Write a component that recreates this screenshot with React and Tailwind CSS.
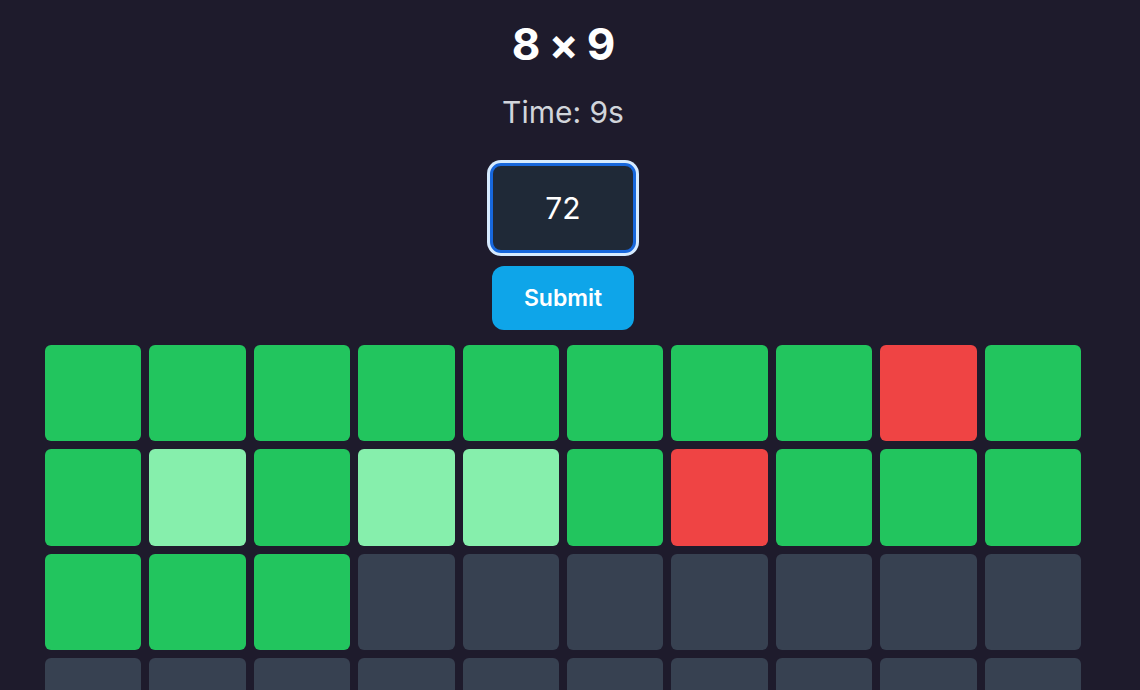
const rows = [
  ['g', 'g', 'g', 'g', 'g', 'g', 'g', 'g', 'r', 'g'],
  ['g', 'l', 'g', 'l', 'l', 'g', 'r', 'g', 'g', 'g'],
  ['g', 'g', 'g', 'e', 'e', 'e', 'e', 'e', 'e', 'e'],
];

const colors = {
  g: 'bg-[#22c55e]',
  l: 'bg-[#86efac]',
  r: 'bg-[#ef4444]',
  e: 'bg-[#374151]',
};

export default function App() {
  const cells = [];
  for (let r = 0; r < 10; r++) {
    for (let c = 0; c < 10; c++) {
      cells.push(rows[r] ? rows[r][c] : 'e');
    }
  }

  return (
    <div className="min-h-screen bg-[#1e1b2c] text-white" style={{ fontFamily: 'Inter, "Noto Sans", sans-serif' }}>
      <div className="w-[1126px]">
        <div className="flex flex-col items-center pt-[22px]">
          <h1 className="text-[44px] font-bold leading-none tracking-tight">8 × 9</h1>
          <p className="mt-[31px] text-[30px] leading-none text-[#d1d5db]">Time: 9s</p>
          <div className="mt-[33px] rounded-[14px] bg-[#d6ebff] p-[3px]">
            <input
              readOnly
              value="72"
              className="block h-[90px] w-[146px] rounded-[11px] border-[3px] border-[#1767dc] bg-[#1f2937] text-center text-[30px] text-white outline-none"
            />
          </div>
          <button className="mt-[10px] h-[64px] w-[142px] rounded-xl bg-[#0ea5e9] text-[23px] font-semibold text-white">
            Submit
          </button>
        </div>
        <div className="mt-[15px] px-[45px]">
          <div className="grid grid-cols-10 gap-2">
            {cells.map((k, i) => (
              <div key={i} className={`aspect-square rounded-md ${colors[k]}`} />
            ))}
          </div>
        </div>
      </div>
    </div>
  );
}
